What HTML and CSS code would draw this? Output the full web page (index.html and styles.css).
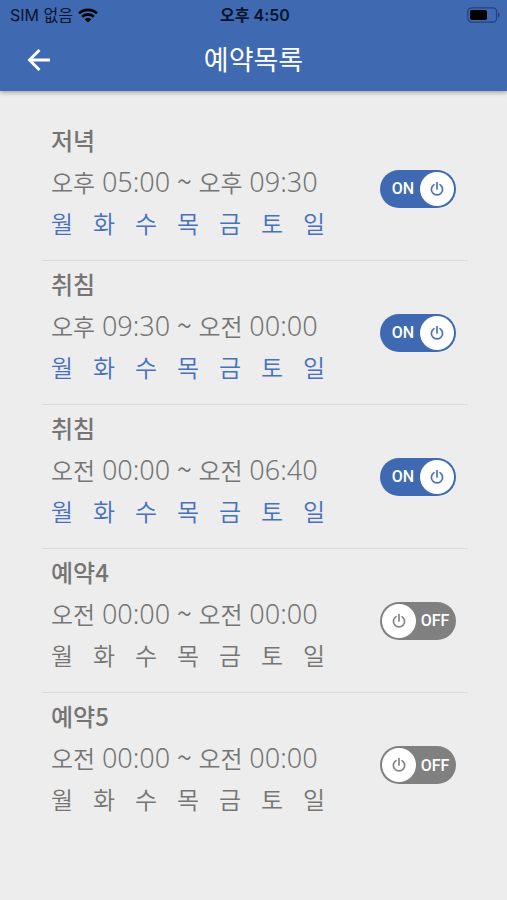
FILE: index.html
```html
<!DOCTYPE html>
<html lang="ko">
<head>
<meta charset="utf-8">
<meta name="viewport" content="width=device-width, initial-scale=1">
<title>예약목록</title>
<link rel="stylesheet" href="styles.css">
</head>
<body>
<svg class="defs" aria-hidden="true">
  <symbol id="power" viewBox="0 0 16 16">
    <path d="M8 1.5v6.5M5 3.6a5.6 5.6 0 1 0 6 0" fill="none" stroke="currentColor" stroke-width="1.7" stroke-linecap="round"/>
  </symbol>
</svg>
<header class="top">
  <div class="status">
    <div class="status-left">
      <span>SIM 없음</span>
      <svg class="wifi" viewBox="0 0 20 15" aria-hidden="true">
        <path d="M1 5.4a13 13 0 0 1 18 0M4.2 8.7a8.4 8.4 0 0 1 11.6 0" fill="none" stroke="currentColor" stroke-width="2.7"/>
        <path d="M6.7 11.2a4.8 4.8 0 0 1 6.6 0L10 14.6z" fill="currentColor"/>
      </svg>
    </div>
    <span class="clock">오후 4:50</span>
    <svg class="battery" viewBox="0 0 33 16" aria-hidden="true">
      <rect x="0.8" y="0.8" width="28.8" height="14.4" rx="4" fill="none" stroke="#254379" stroke-width="1.3"/>
      <rect x="3" y="3" width="17" height="10" rx="1.8" fill="#000"/>
      <path d="M31 5.4v5.2q1.7-.8 1.7-2.6T31 5.4z" fill="#254379"/>
    </svg>
  </div>
  <div class="bar">
    <button class="back" type="button" aria-label="뒤로">
      <svg viewBox="0 0 24 24" aria-hidden="true"><path d="M12.5 2 2.5 12l10 10M2.5 12H23" fill="none" stroke="currentColor" stroke-width="2.9"/></svg>
    </button>
    <h1>예약목록</h1>
  </div>
</header>
<main>
  <ul class="list">
    <li class="item on">
      <div class="info">
        <h2>저녁</h2>
        <p class="range">오후 <time>05:00</time> <i>~</i> 오후 <time>09:30</time></p>
        <p class="days"><span>월</span><span>화</span><span>수</span><span>목</span><span>금</span><span>토</span><span>일</span></p>
      </div>
      <label class="switch"><input type="checkbox" checked><span class="state">ON</span><span class="knob"><svg aria-hidden="true"><use href="#power"/></svg></span></label>
    </li>
    <li class="item on">
      <div class="info">
        <h2>취침</h2>
        <p class="range">오후 <time>09:30</time> <i>~</i> 오전 <time>00:00</time></p>
        <p class="days"><span>월</span><span>화</span><span>수</span><span>목</span><span>금</span><span>토</span><span>일</span></p>
      </div>
      <label class="switch"><input type="checkbox" checked><span class="state">ON</span><span class="knob"><svg aria-hidden="true"><use href="#power"/></svg></span></label>
    </li>
    <li class="item on">
      <div class="info">
        <h2>취침</h2>
        <p class="range">오전 <time>00:00</time> <i>~</i> 오전 <time>06:40</time></p>
        <p class="days"><span>월</span><span>화</span><span>수</span><span>목</span><span>금</span><span>토</span><span>일</span></p>
      </div>
      <label class="switch"><input type="checkbox" checked><span class="state">ON</span><span class="knob"><svg aria-hidden="true"><use href="#power"/></svg></span></label>
    </li>
    <li class="item">
      <div class="info">
        <h2>예약4</h2>
        <p class="range">오전 <time>00:00</time> <i>~</i> 오전 <time>00:00</time></p>
        <p class="days"><span>월</span><span>화</span><span>수</span><span>목</span><span>금</span><span>토</span><span>일</span></p>
      </div>
      <label class="switch"><input type="checkbox"><span class="knob"><svg aria-hidden="true"><use href="#power"/></svg></span><span class="state">OFF</span></label>
    </li>
    <li class="item">
      <div class="info">
        <h2>예약5</h2>
        <p class="range">오전 <time>00:00</time> <i>~</i> 오전 <time>00:00</time></p>
        <p class="days"><span>월</span><span>화</span><span>수</span><span>목</span><span>금</span><span>토</span><span>일</span></p>
      </div>
      <label class="switch"><input type="checkbox"><span class="knob"><svg aria-hidden="true"><use href="#power"/></svg></span><span class="state">OFF</span></label>
    </li>
  </ul>
</main>
</body>
</html>
```

FILE: styles.css
```css
* { box-sizing: border-box; }

body {
  margin: 0;
  background: #ededed;
  color: #757575;
  font-family: "Noto Sans CJK KR", sans-serif;
}

h1, h2, p, ul { margin: 0; padding: 0; }

.defs { position: absolute; width: 0; height: 0; }

.top {
  background: #3f69b1;
  box-shadow: 0 1px 5px rgba(0, 0, 0, 0.4);
}

.status {
  display: grid;
  grid-template-columns: 1fr auto 1fr;
  align-items: center;
  height: 28px;
  padding: 2px 7px 0 10px;
  color: #07142b;
  font-family: Inter, "Noto Sans CJK KR", sans-serif;
  font-size: 16px;
  line-height: 26px;
}

.status-left { display: flex; align-items: center; gap: 5px; }
.wifi { width: 20px; height: 15px; color: #000; }
.clock { font-weight: 600; }
.battery { width: 33px; height: 16px; justify-self: end; }

.bar {
  display: grid;
  grid-template-columns: 78px 1fr 78px;
  align-items: center;
  height: 63px;
  color: #fff;
}

.back {
  display: flex;
  justify-content: center;
  padding: 12px 0;
  border: 0;
  background: none;
  color: inherit;
}
.back svg { width: 24px; height: 24px; }

h1 {
  padding-bottom: 2px;
  font-size: 27px;
  font-weight: 400;
  line-height: 56px;
  text-align: center;
}

main { padding: 26px 39px 0 42px; }

.list { list-style: none; }

.item {
  display: flex;
  align-items: center;
  justify-content: space-between;
  height: 144px;
  padding: 0 12px 0 9px;
  border-bottom: 1px solid #dadada;
}
.item:last-child { border-bottom: 0; }

.info { padding-bottom: 16px; }

h2 {
  font-size: 24px;
  font-weight: 500;
  line-height: 42px;
}

.range {
  font-size: 24px;
  font-weight: 350;
  line-height: 42px;
  white-space: nowrap;
}
.range time, .range i {
  font-size: 27px;
  font-style: normal;
  line-height: 1;
}
.range time {
  font-family: "Noto Sans", sans-serif;
  font-weight: 350;
}

.days {
  display: flex;
  gap: 20px;
  font-size: 24px;
  font-weight: 350;
  line-height: 40px;
}
.days span { width: 22px; }
.on .days { color: #4670c0; }

.switch {
  display: flex;
  align-items: center;
  flex: none;
  width: 76px;
  height: 38px;
  padding: 2px;
  border-radius: 19px;
  background: #808080;
  color: #fff;
  font-family: Roboto, sans-serif;
  font-size: 16px;
  font-weight: 500;
}
.on .switch { background: #3f69b1; }

.switch input {
  appearance: none;
  width: 0;
  height: 0;
  margin: 0;
}

.state { flex: 1; text-align: center; }
.on .state { padding-left: 4px; }

.knob {
  display: flex;
  align-items: center;
  justify-content: center;
  width: 34px;
  height: 34px;
  border-radius: 50%;
  background: #fff;
  color: #858585;
}
.on .knob { color: #4a72b5; }
.knob svg { width: 16px; height: 16px; }
```
